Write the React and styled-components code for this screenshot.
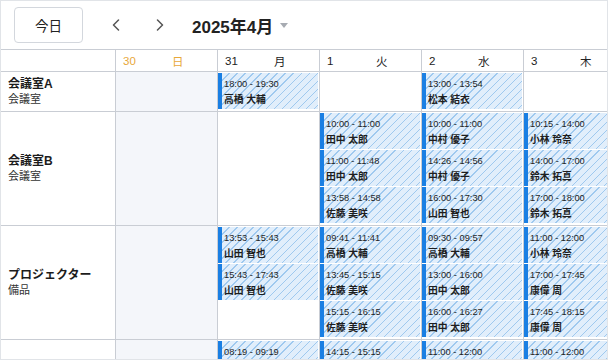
import React from "react";
import styled, { createGlobalStyle } from "styled-components";

const Global = createGlobalStyle`
  html, body { margin: 0; padding: 0; background: #fff; }
  body { font-family: "Liberation Sans", "Noto Sans CJK JP", sans-serif; color: #222; }
`;

const Frame = styled.div`
  width: 608px;
  height: 360px;
  box-sizing: border-box;
  border: 1px solid #e1e4e8;
  overflow: hidden;
  background: #fff;
`;

const Toolbar = styled.div`
  height: 48px;
  display: flex;
  align-items: center;
  padding-left: 13px;
  border-bottom: 1px solid #c9cdd4;
`;

const TodayButton = styled.button`
  width: 69px;
  height: 36px;
  box-sizing: border-box;
  border: 1px solid #d3d7dd;
  border-radius: 4px;
  background: #fff;
  font-family: "Liberation Sans", "Noto Sans CJK JP", sans-serif;
  font-size: 13.5px;
  color: #222;
  padding: 0;
`;

const NavButton = styled.span`
  display: flex;
  align-items: center;
  justify-content: center;
  width: 8px;
  height: 12px;
  margin-left: ${(p) => p.$ml}px;
`;

const Title = styled.div`
  margin-left: 28px;
  font-size: 17px;
  font-weight: 700;
  color: #222;
  display: flex;
  align-items: center;
`;

const Caret = styled.span`
  margin-left: 7px;
  width: 0;
  height: 0;
  border-left: 4.5px solid transparent;
  border-right: 4.5px solid transparent;
  border-top: 5px solid #a7abb2;
`;

const Grid = styled.div`
  display: grid;
  grid-template-columns: 114px repeat(5, 102px);
  width: max-content;
`;

const HeadCell = styled.div`
  height: 22px;
  box-sizing: border-box;
  border-bottom: 1px solid #c9cdd4;
  border-left: ${(p) => (p.$first ? "none" : "1px solid #c9cdd4")};
  display: flex;
  align-items: center;
  padding-left: 7px;
  font-size: 11.5px;
  color: ${(p) => (p.$sun ? "#e8a83a" : "#222")};
`;

const DayNum = styled.span`
  width: 49px;
`;

const ResourceCell = styled.div`
  border-bottom: 1px solid #c9cdd4;
  display: flex;
  flex-direction: column;
  justify-content: center;
  padding-left: 7px;
`;

const ResName = styled.div`
  font-size: 12px;
  font-weight: 700;
  line-height: 15px;
  color: #1c1c1c;
`;

const ResType = styled.div`
  font-size: 11px;
  line-height: 15px;
  color: #333;
`;

const DayCell = styled.div`
  border-bottom: 1px solid #c9cdd4;
  border-left: 1px solid #c9cdd4;
  background: ${(p) => (p.$sun ? "#f4f6fa" : "#fff")};
  padding: 1px 1px 2px 0;
  min-height: 36px;
  display: flex;
  flex-direction: column;
  gap: 1px;
`;

const Event = styled.div`
  height: 36px;
  box-sizing: border-box;
  border-left: 4px solid #1a7fe3;
  padding: 3px 0 0 2px;
  background-color: #e1eefb;
  background-image: repeating-linear-gradient(
    135deg,
    #e1eefb 0px,
    #e1eefb 4.6px,
    #9fc9ef 4.6px,
    #9fc9ef 5.7px
  );
  line-height: 16px;
  color: #1e1e1e;
  overflow: hidden;
  white-space: nowrap;
`;

const EvTime = styled.div`
  font-size: 9.3px;
`;

const EvName = styled.div`
  font-size: 9.8px;
  font-weight: 700;
`;

const days = [
  { n: "30", w: "日", sun: true },
  { n: "31", w: "月" },
  { n: "1", w: "火" },
  { n: "2", w: "水" },
  { n: "3", w: "木" },
];

const resources = [
  {
    name: "会議室A",
    type: "会議室",
    ev: [
      [],
      [["18:00 - 19:30", "高橋 大輔"]],
      [],
      [["13:00 - 13:54", "松本 結衣"]],
      [],
    ],
  },
  {
    name: "会議室B",
    type: "会議室",
    ev: [
      [],
      [],
      [
        ["10:00 - 11:00", "田中 太郎"],
        ["11:00 - 11:48", "田中 太郎"],
        ["13:58 - 14:58", "佐藤 美咲"],
      ],
      [
        ["10:00 - 11:00", "中村 優子"],
        ["14:26 - 14:56", "中村 優子"],
        ["16:00 - 17:30", "山田 智也"],
      ],
      [
        ["10:15 - 14:00", "小林 玲奈"],
        ["14:00 - 17:00", "鈴木 拓真"],
        ["17:00 - 18:00", "鈴木 拓真"],
      ],
    ],
  },
  {
    name: "プロジェクター",
    type: "備品",
    ev: [
      [],
      [
        ["13:53 - 15:43", "山田 智也"],
        ["15:43 - 17:43", "山田 智也"],
      ],
      [
        ["09:41 - 11:41", "高橋 大輔"],
        ["13:45 - 15:15", "佐藤 美咲"],
        ["15:15 - 16:15", "佐藤 美咲"],
      ],
      [
        ["09:30 - 09:57", "高橋 大輔"],
        ["13:00 - 16:00", "田中 太郎"],
        ["16:00 - 16:27", "田中 太郎"],
      ],
      [
        ["11:00 - 12:00", "小林 玲奈"],
        ["17:00 - 17:45", "康偉 周"],
        ["17:45 - 18:15", "康偉 周"],
      ],
    ],
  },
  {
    name: "",
    type: "",
    ev: [
      [],
      [["08:19 - 09:19", "伊藤 健"]],
      [["14:15 - 15:15", "佐藤 美咲"]],
      [["11:00 - 12:00", "田中 太郎"]],
      [["11:00 - 12:00", "小林 玲奈"]],
    ],
  },
];

const Chevron = ({ dir }) => (
  <svg width="8" height="12" viewBox="0 0 8 12" fill="none">
    <path
      d={dir === "left" ? "M6.5 1 L1.5 6 L6.5 11" : "M1.5 1 L6.5 6 L1.5 11"}
      stroke="#555"
      strokeWidth="1.5"
      strokeLinecap="round"
      strokeLinejoin="round"
    />
  </svg>
);

export default function App() {
  return (
    <>
      <Global />
      <Frame>
        <Toolbar>
          <TodayButton>今日</TodayButton>
          <NavButton $ml={29}>
            <Chevron dir="left" />
          </NavButton>
          <NavButton $ml={36}>
            <Chevron dir="right" />
          </NavButton>
          <Title>
            2025年4月
            <Caret />
          </Title>
        </Toolbar>
        <Grid>
          <HeadCell $first />
          {days.map((d) => (
            <HeadCell key={d.n} $sun={d.sun}>
              <DayNum>{d.n}</DayNum>
              <span>{d.w}</span>
            </HeadCell>
          ))}
          {resources.map((r, ri) => (
            <React.Fragment key={ri}>
              <ResourceCell>
                {r.name && <ResName>{r.name}</ResName>}
                {r.type && <ResType>{r.type}</ResType>}
              </ResourceCell>
              {r.ev.map((list, di) => (
                <DayCell key={di} $sun={days[di].sun}>
                  {list.map((e, ei) => (
                    <Event key={ei}>
                      <EvTime>{e[0]}</EvTime>
                      <EvName>{e[1]}</EvName>
                    </Event>
                  ))}
                </DayCell>
              ))}
            </React.Fragment>
          ))}
        </Grid>
      </Frame>
    </>
  );
}
